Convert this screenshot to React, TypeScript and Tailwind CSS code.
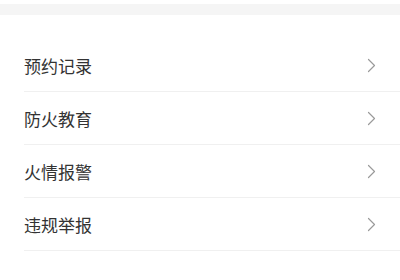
import React from "react";

const items = ["预约记录", "防火教育", "火情报警", "违规举报"];

function Chevron() {
  return (
    <svg width="9" height="15" viewBox="0 0 9 15" fill="none">
      <path d="M1.5 1.5 L7.5 7.5 L1.5 13.5" stroke="#9a9a9a" strokeWidth="1.2" strokeLinecap="round" strokeLinejoin="round" />
    </svg>
  );
}

export default function App() {
  return (
    <div
      className="w-[400px] h-[280px] bg-white overflow-hidden"
      style={{ fontFamily: '"Noto Sans CJK SC", "Noto Sans", sans-serif' }}
    >
      <div className="h-1 bg-white" />
      <div className="h-[11px] bg-[#f5f5f5]" />
      <div className="pt-[24px] pl-6">
        {items.map((t) => (
          <div
            key={t}
            className="h-[53px] flex items-center justify-between pr-6 border-b border-[#f0f0f0]"
          >
            <span className="text-[17px] text-[#333333] leading-none">{t}</span>
            <Chevron />
          </div>
        ))}
      </div>
    </div>
  );
}
